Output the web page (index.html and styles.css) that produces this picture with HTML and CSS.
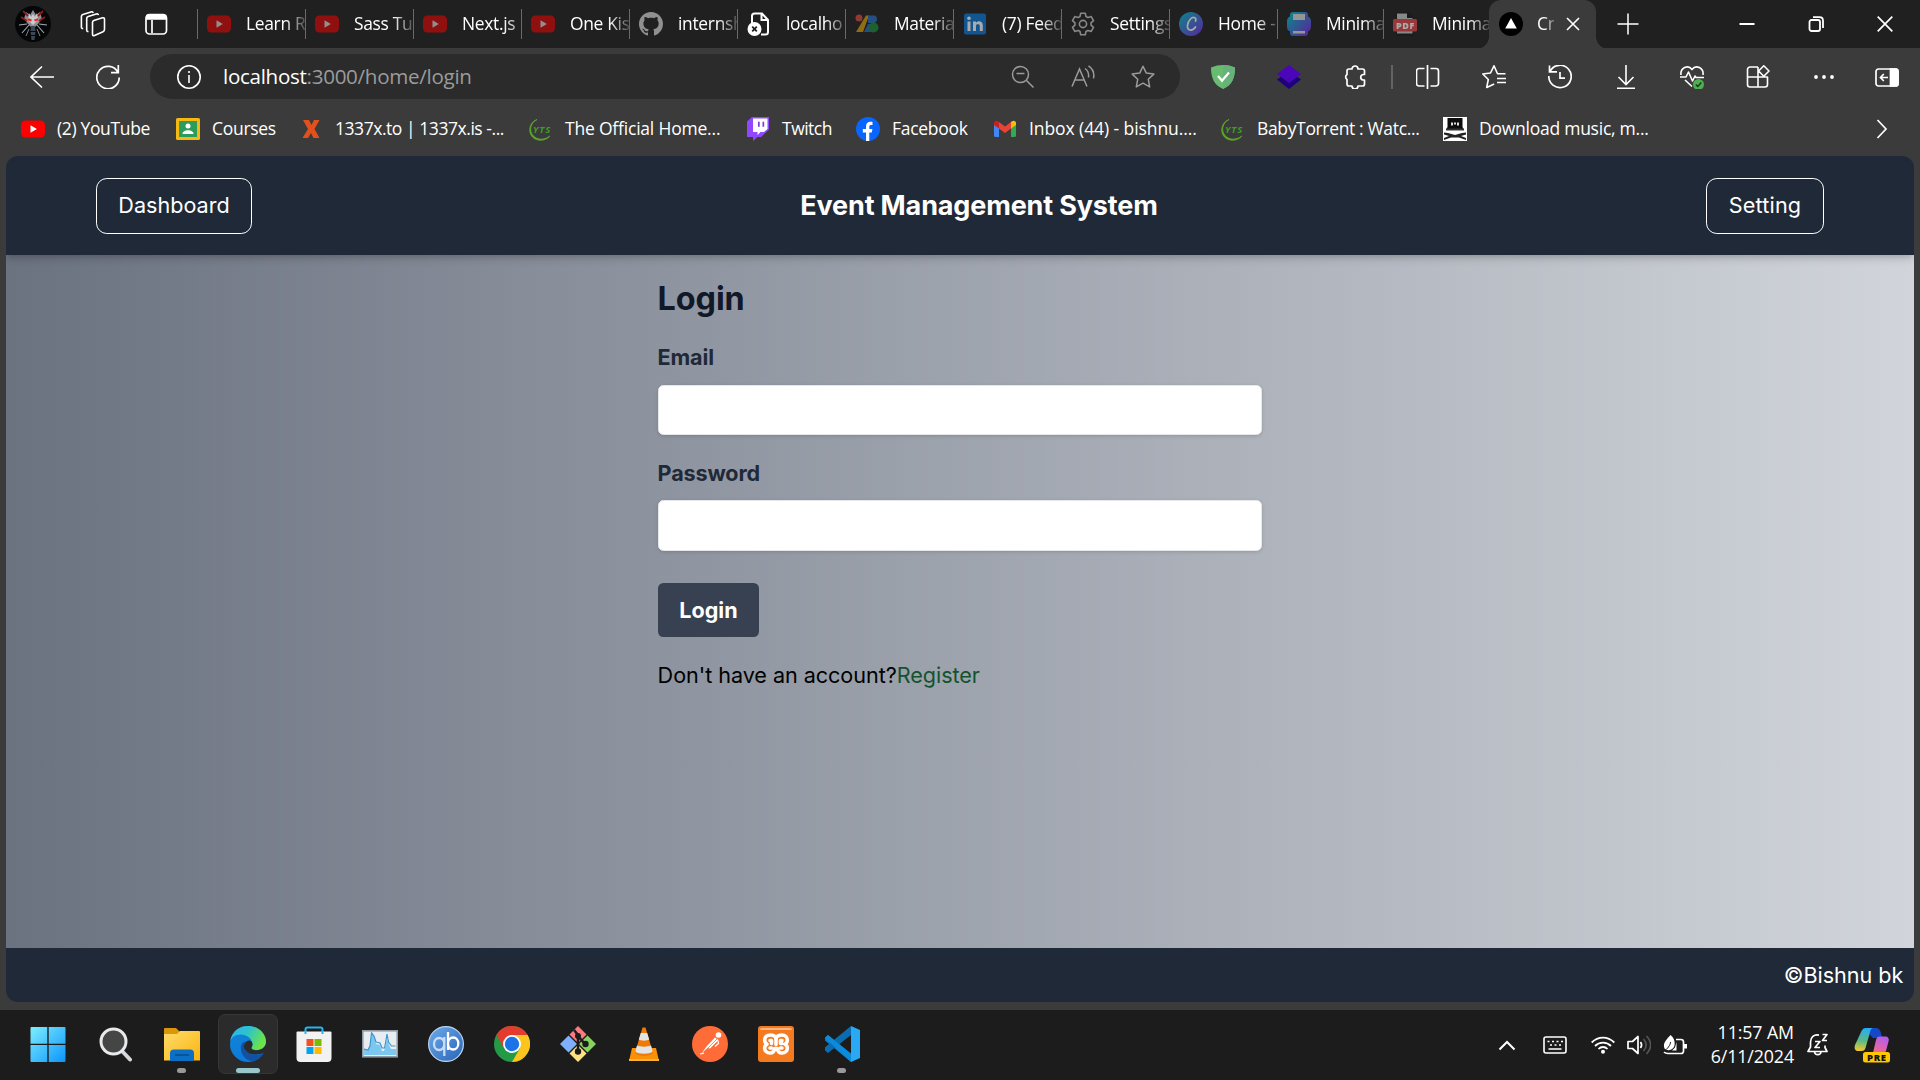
FILE: index.html
```html
<!DOCTYPE html>
<html lang="en">
<head>
<meta charset="utf-8">
<title>Create Next App</title>
<link rel="stylesheet" href="styles.css">
</head>
<body>
<svg class="defs" width="0" height="0">
  <symbol id="yt" viewBox="0 0 24 24"><rect y="3.5" width="24" height="17" rx="4.5" fill="#f00"/><path d="M9.500 8.200v7.600l6.400-3.800z" fill="#fff"/></symbol>
  <symbol id="yts" viewBox="0 0 24 24"><path d="M8 2.500C1 6 0 14 4 18.500c4 4.500 11 5 17 .5-5 5.500-13 5.500-17.500 1C-1.500 15 .5 5 8 2.500z" fill="#5fa82c" stroke="#5fa82c" stroke-width=".8"/><text x="4" y="15.500" font-family="Open Sans, sans-serif" font-size="9.500" font-weight="700" font-style="italic" fill="#3f9a2a" textLength="17">YTS</text></symbol>
  <linearGradient id="canva" x1="0" y1="0" x2="1" y2="1"><stop offset="0" stop-color="#00c4cc"/><stop offset="1" stop-color="#7d2ae8"/></linearGradient>
</svg>

<header class="tabbar">
  <div class="lead">
    <svg class="avatar" viewBox="0 0 36 36"><circle cx="18" cy="18" r="18" fill="#050608"/><path d="M11 6l4 3 3-5 3 5 4-3 2 7-4 5-5 5-5-5-4-5z" fill="#8c8f94"/><path d="M14 7l2 4 2-3 2 3 2-4 1 7-5 5-5-5z" fill="#c9cbce"/><path d="M8 5l5 5M28 5l-5 5M6 11l6 4M30 11l-6 4" stroke="#8e1a1e" stroke-width="1.800"/><path d="M13 13.200l3.500 1.300M23 13.200l-3.500 1.300" stroke="#f02020" stroke-width="2"/><path d="M4 19l8-1M32 19l-8-1M7 27l7-8M29 27l-7-8" stroke="#a3a8ad" stroke-width="1.100"/><path d="M11 30l3-7M25 30l-3-7" stroke="#7c8187" stroke-width="1"/><path d="M16 20h4l.5 5h-5zM15.500 26h5l-.5 3h-4zM16 30h4l-.5 4h-3z" fill="#3c4654"/></svg>
    <svg viewBox="0 0 26 26" fill="none" stroke="#fff" stroke-width="1.600" stroke-linejoin="round"><path d="M12.500 11.200c0-1 .4-1.500 1.300-1.800l8.700-2.600c1.200-.3 2 .3 2 1.500v10.200c0 1-.5 1.700-1.500 2.200l-8.500 3.800c-1.200.5-2 0-2-1.200z"/><path d="M8.500 20.500c-1.300.3-1.800-.4-1.800-1.500V7.500c0-1 .5-1.700 1.500-2l8-2.500c1.200-.3 2 0 2.200 1.200"/><path d="M3.200 17.500c-1.300.3-1.800-.4-1.800-1.500V5.500c0-1 .5-1.600 1.400-1.900L11 .9c1.200-.3 1.900 0 2.200 1"/></svg>
    <svg viewBox="0 0 24 24" fill="none" stroke="#fff" stroke-width="1.700"><rect x="2" y="2.500" width="20.500" height="19.500" rx="3.500"/><path d="M3 3.500h18.500v3.500H3z" fill="#fff"/><path d="M8 8v13"/></svg>
  </div>
  <div class="tab"><svg class="dim"><use href="#yt"/></svg><span>Learn R</span></div>
  <div class="tab"><svg class="dim"><use href="#yt"/></svg><span>Sass Tu</span></div>
  <div class="tab"><svg class="dim"><use href="#yt"/></svg><span class="full">Next.js</span></div>
  <div class="tab"><svg class="dim"><use href="#yt"/></svg><span>One Kis</span></div>
  <div class="tab"><svg class="dim" viewBox="0 0 16 16"><path fill="#fff" d="M8 0C3.580 0 0 3.580 0 8c0 3.540 2.290 6.530 5.470 7.590.4.070.55-.17.55-.38 0-.19-.01-.82-.01-1.490-2.010.37-2.530-.49-2.690-.94-.09-.23-.48-.94-.82-1.130-.28-.15-.68-.52-.01-.53.63-.01 1.080.58 1.230.82.72 1.210 1.870.87 2.330.66.070-.52.28-.87.51-1.070-1.780-.2-3.640-.89-3.640-3.950 0-.87.31-1.590.82-2.150-.08-.2-.36-1.020.08-2.120 0 0 .67-.21 2.200.82.64-.18 1.320-.27 2-.27s1.360.09 2 .27c1.530-1.040 2.200-.82 2.200-.82.44 1.100.16 1.920.08 2.120.51.56.82 1.270.82 2.150 0 3.070-1.870 3.750-3.650 3.950.29.25.54.73.54 1.480 0 1.070-.01 1.930-.01 2.200 0 .21.15.46.55.38A8.010 8.010 0 0016 8c0-4.420-3.580-8-8-8z"/></svg><span>internsh</span></div>
  <div class="tab"><svg viewBox="0 0 24 24"><path d="M5 12V4c0-1.600 1-2.500 2.500-2.500H15L21 8v12c0 1.700-1 2.500-2.500 2.500H14M14.500 1.500V8H21" fill="none" stroke="#fff" stroke-width="2"/><circle cx="7.500" cy="17" r="7" fill="#fff"/><path d="M5.200 14.700l4.600 4.600m0-4.600l-4.600 4.600" stroke="#202020" stroke-width="1.800"/></svg><span>localho</span></div>
  <div class="tab"><svg class="dim" viewBox="0 0 24 24"><circle cx="4" cy="6" r="3.500" fill="#ff5546"/><path d="M11 3.500h3L8 20H1z" fill="#ffb900"/><path d="M13 3.500h6c4 0 4 7 0 7.500h-6zM13 12h4v8h-8z" fill="#2b7de9"/><circle cx="18.500" cy="15.500" r="5" fill="#19a23f"/></svg><span>Materia</span></div>
  <div class="tab"><svg class="dim more" viewBox="0 0 24 24"><rect x="1" y="1.500" width="22" height="21" rx="2" fill="#0a78d6"/><path d="M4.500 9.500h3V19h-3zM10 9.500h3v1.300c1.800-2.500 6.800-2 6.800 2.500V19h-3v-5c0-2.700-3.800-2.700-3.800 0v5h-3z" fill="#fff"/><circle cx="6" cy="6.300" r="1.800" fill="#fff"/></svg><span>(7) Feed</span></div>
  <div class="tab"><svg class="dim more" viewBox="0 0 24 24" fill="none" stroke="#c8c8c8" stroke-width="1.600" stroke-linejoin="round"><path d="M9.700 1.200h4.600l.7 3.300 2 1.100 3.200-1 2.300 4-2.500 2.300v2.200l2.500 2.300-2.300 4-3.200-1-2 1.100-.7 3.300H9.700L9 19.500l-2-1.100-3.200 1-2.300-4L4 13.100v-2.200L1.500 8.600l2.300-4 3.200 1 2-1.100z"/><circle cx="12" cy="12" r="3.600"/></svg><span>Settings</span></div>
  <div class="tab"><svg class="dim more" viewBox="0 0 24 24"><circle cx="12" cy="12" r="12" fill="url(#canva)"/><path d="M16.500 9c1.500-3-2-5-5-2-4 4-4 10.500-.5 11 2.500.3 4.500-1.500 5.500-3" fill="none" stroke="#fff" stroke-width="1.700" stroke-linecap="round"/></svg><span>Home -</span></div>
  <div class="tab t106"><svg class="dim more" viewBox="0 0 24 24"><rect y="4" width="24" height="16" rx="5" fill="url(#canva)"/><rect x="3" width="18" height="24" rx="3" fill="url(#canva)"/><path d="M6 2h12v6H6zM6 19h12v2.500H6z" fill="#ddd"/></svg><span>Minima</span></div>
  <div class="tab t106"><svg class="dim more" viewBox="0 0 24 24"><path d="M3 0h13l5 5v18.500H3z" fill="#181818"/><path d="M4 1.500h10V6h5.500v15.500H4z" fill="#c8c8c8"/><rect x="0" y="7" width="24" height="12.500" rx="1.500" fill="#e4484b"/><text x="3" y="16.700" font-family="Open Sans, sans-serif" font-size="9" font-weight="800" fill="#fff" textLength="18">PDF</text></svg><span>Minima</span></div>
  <div class="tab active"><svg viewBox="0 0 24 24"><circle cx="12" cy="12" r="12" fill="#000"/><path d="M12 6l5.800 10.500H6.200z" fill="#fff"/></svg><span>Cr</span><svg class="close" viewBox="0 0 14 14"><path d="M1 1l12 12M13 1L1 13" stroke="#fff" stroke-width="1.600"/></svg></div>
  <svg class="plus" viewBox="0 0 22 22"><path d="M11 .5v21M.5 11h21" stroke="#fff" stroke-width="1.500"/></svg>
  <div class="winbtns">
    <svg viewBox="0 0 16 16"><path d="M.5 8h15" stroke="#fff" stroke-width="2"/></svg>
    <svg viewBox="0 0 16 16" fill="none" stroke="#fff" stroke-width="1.800"><rect x="1.500" y="4" width="10.500" height="11" rx="2"/><path d="M5 1.200h6.500c2 0 3.500 1.500 3.500 3.500V12"/></svg>
    <svg viewBox="0 0 16 16"><path d="M.7.7l14.600 14.600M15.300.7L.7 15.300" stroke="#fff" stroke-width="1.700"/></svg>
  </div>
</header>

<div class="toolbar">
  <svg class="back" viewBox="0 0 24 24" fill="none" stroke="#fff" stroke-width="1.600"><path d="M24 12H1M12 1.500L1 12l11 10.500"/></svg>
  <svg class="reload" viewBox="0 0 24 24" fill="none" stroke="#fff" stroke-width="1.700"><path d="M22 7.500A11.200 11.200 0 1 0 23.200 12.500M22.300 0V7.700H15"/></svg>
  <div class="address">
    <svg viewBox="0 0 24 24" fill="none" stroke="#fff" stroke-width="1.600"><circle cx="12" cy="12" r="11.200"/><path d="M12 10v8M12 6v2"/></svg>
    <p class="url"><b>localhost</b><span>:3000/home/login</span></p>
    <div class="addr-icons">
      <svg viewBox="0 0 24 24" fill="none" stroke="#9b9b9b" stroke-width="1.500"><circle cx="9.500" cy="9.500" r="8"/><path d="M5.500 8.500h8M15.500 15.500L22.500 22.500"/></svg>
      <svg viewBox="0 0 24 24" fill="none" stroke="#9b9b9b" stroke-width="1.500"><path d="M1 21.500L8.500 4 16 21.500M4 15h9M14 3.500c3 2 4 5 3.500 9M17.500 .8c4.500 3 6 7.500 5 12.500"/></svg>
      <svg viewBox="0 0 24 24" fill="none" stroke="#9b9b9b" stroke-width="1.500" stroke-linejoin="round"><path d="M12 1.200l3.300 6.900 7.500 1-5.500 5.200 1.400 7.600L12 18.200l-6.700 3.700 1.400-7.600L1.200 9.100l7.500-1z"/></svg>
    </div>
  </div>
  <div class="tools">
    <svg viewBox="0 0 24 24"><path d="M12 0c4 0 8 .8 12 2.500C24 13 21 20 12 24 3 20 0 13 0 2.500 4 .8 8 0 12 0z" fill="#68bc71"/><path d="M12 0c4 0 8 .8 12 2.500C24 13 21 20 12 24z" fill="#67b279"/><path d="M7 11l4 4.800L18 7.500" fill="none" stroke="#fff" stroke-width="2.200"/></svg>
    <svg viewBox="0 0 24 24"><path d="M12 6l12 8.500L12 24 0 14.500z" fill="#1c007c"/><path d="M12 0l12 9-12 9L0 9z" fill="#4a06b8"/></svg>
    <svg viewBox="0 0 24 24" fill="none" stroke="#fff" stroke-width="1.700" stroke-linejoin="round"><path d="M9 4a3 3 0 0 1 6 0h4.500A2 2 0 0 1 21.500 6v3.500h-1.500a2.800 2.800 0 0 0 0 5.500h1.500v4a2 2 0 0 1-2 2H15a3 3 0 0 1-6 0H6a2 2 0 0 1-2-2v-4.500a3 3 0 0 1 0-5V6a2 2 0 0 1 2-2z"/></svg>
  </div>
  <i class="vline"></i>
  <div class="tools tail">
    <svg viewBox="0 0 24 24" fill="none" stroke="#fff" stroke-width="1.700"><path d="M11.500 0v24M8.500 3.500H3a2.500 2.500 0 0 0-2.500 2.500v12.500A2.500 2.500 0 0 0 3 21H8.500M14.500 3.500h5.500A2.500 2.500 0 0 1 22.500 6v12.500a2.500 2.500 0 0 1-2.500 2.500H14.500"/></svg>
    <svg viewBox="0 0 24 24" fill="none" stroke="#fff" stroke-width="1.600" stroke-linejoin="round"><path d="M23.500 8.800H15.500L12 .8 8.500 8 .8 9l5.500 5.500L4.700 22.500l7.500-3.500M15 13.500h9M15 17.500h9"/></svg>
    <svg viewBox="0 0 24 24" fill="none" stroke="#fff" stroke-width="1.700"><path d="M2.200 6A11.200 11.200 0 1 1 .8 11M1.500 .5V6.800H9M12 7v6.200h5"/></svg>
    <svg viewBox="0 0 24 24" fill="none" stroke="#fff" stroke-width="1.600"><path d="M12 0v19M4.500 12l7.500 7.500 7.500-7.500M3 23.200h18"/></svg>
    <svg viewBox="0 0 24 24" fill="none" stroke="#fff" stroke-width="1.600" stroke-linejoin="round"><path d="M1 10C0 3 8-1 12 4.500c4-5.500 12-1.500 11 5.500M0 12h6l2.500-5 4 9 2.500-5 1 1.500h8M5 15l7 6.500"/><circle cx="18.500" cy="19.500" r="5.500" fill="#4caf50" stroke="none"/><path d="M15.800 19.500l2 2 3.500-4" stroke="#1c3a1f" stroke-width="1.400"/></svg>
    <svg viewBox="0 0 24 24" fill="none" stroke="#fff" stroke-width="1.600" stroke-linejoin="round"><path d="M12 2H4a2.500 2.500 0 0 0-2.500 2.500V19.500A2.500 2.500 0 0 0 4 22h15a2.500 2.500 0 0 0 2.500-2.500V12H1.500M12 2v20M17.800.8L23 6l-5.200 5.200L12.600 6z"/></svg>
    <svg viewBox="0 0 24 24" fill="#fff"><circle cx="4" cy="12" r="1.900"/><circle cx="12" cy="12" r="1.900"/><circle cx="20" cy="12" r="1.900"/></svg>
    <svg viewBox="0 0 24 24" fill="none" stroke="#fff" stroke-width="1.700"><rect x="1" y="4" width="22" height="17" rx="2.500"/><path d="M15.500 4h6A2 2 0 0 1 23 6v13a2 2 0 0 1-1.500 2h-6z" fill="#fff"/><path d="M13 12.500H5.500M8.800 9L5.500 12.500 8.800 16"/></svg>
  </div>
</div>

<nav class="bookmarks">
  <a><svg><use href="#yt"/></svg><span class="b1">(2) YouTube</span></a>
  <a><svg viewBox="0 0 24 24"><rect y="1" width="24" height="22" rx="1.500" fill="#f4b912"/><rect x="3" y="4" width="18" height="16" fill="#2c9c5a"/><circle cx="12" cy="9" r="2.500" fill="#fff"/><path d="M6.500 17c0-5 11-5 11 0z" fill="#fff"/></svg><span class="b2">Courses</span></a>
  <a><svg viewBox="0 0 24 24"><path d="M4 3h6l2.500 5L15 3h5.500l-5 9 5 9h-6L12 16l-3 5H3.500l5.500-9z" fill="#e2511d"/></svg><span class="b3">1337x.to | 1337x.is -...</span></a>
  <a><svg><use href="#yts"/></svg><span class="b4">The Official Home...</span></a>
  <a><svg viewBox="0 0 24 24"><path d="M6 0L1 4.500V20h6v4l4.500-4H15l8-7.500V0z" fill="#9146ff"/><path d="M7 1.500h14.500v10.500L18 15h-3.500L11.500 18v-3H7z" fill="#fff"/><path d="M12 4.800h1.700v5H12zM16.500 4.800h1.700v5h-1.700z" fill="#7b3be0"/></svg><span class="b5">Twitch</span></a>
  <a><svg viewBox="0 0 24 24"><circle cx="12" cy="12" r="12" fill="#0866ff"/><path d="M10 24v-8.500H6.800V12H10V9.800c0-4 2-5.400 6.500-4.800v3c-2.500-.2-3.200.2-3.200 2V12h3.100l-.6 3.500h-2.500V24z" fill="#fff"/></svg><span class="b6">Facebook</span></a>
  <a><svg viewBox="0 0 24 24"><path d="M1 6v12.500A1.500 1.500 0 0 0 2.500 20H6V9z" fill="#4285f4"/><path d="M23 6v12.500a1.500 1.500 0 0 1-1.500 1.500H18V9z" fill="#34a853"/><path d="M6 5l6 4.500L18 5v6.500L12 16 6 11.500z" fill="#ea4335"/><path d="M1 6c0-2 2-3 4-1.800L6 5v6.500L1 8z" fill="#c5221f"/><path d="M23 6c0-2-2-3-4-1.800L18 5v6.500L23 8z" fill="#fbbc04"/></svg><span class="b7">Inbox (44) - bishnu....</span></a>
  <a><svg><use href="#yts"/></svg><span class="b8">BabyTorrent : Watc...</span></a>
  <a><svg viewBox="0 0 24 24"><rect width="24" height="24" fill="#fff"/><path d="M4.500 1h15v9l1.500 3H3l1.500-3z" fill="#0c0c0c"/><path d="M3 11.500h18v2H3z" fill="#333"/><path d="M8 5.500h2v3H8zM11 5.500h2v2h-2zM14 5.500h2v3h-2z" fill="#ddd"/><path d="M1 15.500l4 .5 7 2 7-2 4-.5v2l-5 1.500 5 2v2l-7-2.500H8L1 23v-2l5-2-5-1.500z" fill="#222"/></svg><span class="b9">Download music, m...</span></a>
  <svg class="chev" viewBox="0 0 12 20"><path d="M1.500 1l8.500 9-8.500 9" fill="none" stroke="#fff" stroke-width="1.700"/></svg>
</nav>

<div class="page">
  <div class="site-header">
    <button class="outline dash">Dashboard</button>
    <h1>Event Management System</h1>
    <button class="outline set">Setting</button>
  </div>
  <main>
    <form>
      <h2>Login</h2>
      <label>Email</label>
      <input type="email">
      <label>Password</label>
      <input class="pw" type="password">
      <button class="submit" type="button">Login</button>
      <p>Don't have an account?<a>Register</a></p>
    </form>
  </main>
  <footer>©Bishnu bk</footer>
</div>

<div class="taskbar">
  <div class="apps">
    <div class="start"><svg viewBox="0 0 36 36"><defs><linearGradient id="win2" gradientUnits="userSpaceOnUse" x1="0" y1="0" x2="36" y2="36"><stop offset="0" stop-color="#80f0ff"/><stop offset="1" stop-color="#0a94fb"/></linearGradient></defs><path d="M.5 2a1 1 0 0 1 1-1H17.300v16.800H.5zM18.700 1h15.800a1 1 0 0 1 1 1v15.800H18.700zM.5 19h16.800v17H1.500a1 1 0 0 1-1-1zM18.700 19h16.800v16a1 1 0 0 1-1 1H18.700z" fill="url(#win2)"/></svg></div>
    <div><svg viewBox="0 0 36 36"><path d="M24 25l8 8.500" stroke="#d4d7dc" stroke-width="4" stroke-linecap="round"/><circle cx="15.500" cy="15.500" r="12.500" fill="#454545" stroke="#e8e9eb" stroke-width="3"/></svg></div>
    <div class="run"><svg viewBox="0 0 36 36"><defs><linearGradient id="fold" x1="0" y1="0" x2="1" y2="1"><stop offset="0" stop-color="#ffdc6b"/><stop offset="1" stop-color="#fab40f"/></linearGradient></defs><path d="M0 3a1 1 0 0 1 1-1h11l4 4v5H0z" fill="#dc9708"/><path d="M0 8h13l3-3h19a1 1 0 0 1 1 1v28.500H0z" fill="url(#fold)"/><path d="M6 35V27c0-2 1.500-3.500 3.500-3.500h17c2 0 3.500 1.500 3.500 3.500v8z" fill="#0b6fc4"/><path d="M11 29h14" stroke="#0a4d8c" stroke-width="1.600"/></svg></div>
    <div class="run cur"><svg viewBox="0 0 36 36"><defs><linearGradient id="e1" x1="0" y1="0" x2="1" y2=".4"><stop offset="0" stop-color="#2fb2ee"/><stop offset=".5" stop-color="#2cc3cf"/><stop offset="1" stop-color="#6be34a"/></linearGradient><linearGradient id="e2" x1="0" y1="0" x2=".5" y2="1"><stop offset="0" stop-color="#1484d0"/><stop offset="1" stop-color="#0a7be0"/></linearGradient></defs><circle cx="18" cy="18" r="18" fill="url(#e2)"/><path d="M36 15.500c0 6-5 8.500-9.500 8.500l8 3.500L38 24z" fill="#2b2b2b"/><path d="M11 20c-1 8 4 14 11 15.500 5-1 9-4 11.500-8.500C28 30 18 30 14.500 22c-1-3 0-5 1-7-2 .5-4 2.500-4.500 5z" fill="#1152a4"/><path d="M0 16C2 4 10 0 18 0c11 0 18 8 18 15.500 0 6-5 8.500-9.500 8.500-4 0-5.500-1.500-5-2.500 3-4-1-13-11-13C5 8.500 1 12 0 16z" fill="url(#e1)"/><path d="M14 19c1.500-4 5-5.500 7.500-3.500 1.500 2 1.300 4.500 0 6-.5 1 1 2.700 5 2.700 3.500 0 6-1 8-2.500l1.500 3.300-2.500 2c-7 2.500-15 2-18-3-1.500-1.500-2-3.500-1.500-5z" fill="#2b2b2b"/></svg></div>
    <div><svg viewBox="0 0 36 36"><path d="M9.500 10V3.500a2 2 0 0 1 2-2h13a2 2 0 0 1 2 2V10" fill="none" stroke="#26b4f2" stroke-width="2"/><path d="M.5 6.500a1 1 0 0 1 1-1h33a1 1 0 0 1 1 1V32a4 4 0 0 1-4 4h-27a4 4 0 0 1-4-4z" fill="#f2f2f2"/><path d="M9.500 5v3M26.500 5v3" stroke="#26b4f2" stroke-width="2"/><path d="M10.500 13h7v7h-7z" fill="#f25022"/><path d="M18.500 13h7v7h-7z" fill="#7fba00"/><path d="M10.500 21h7v7h-7z" fill="#00a4ef"/><path d="M18.500 21h7v7h-7z" fill="#ffb900"/></svg></div>
    <div><svg viewBox="0 0 36 36"><rect x=".8" y="4.800" width="34.400" height="26" fill="#e9edf2" stroke="#8e9aa4" stroke-width="1.600"/><path d="M2 23h4l2-4 2-13 2 4 2 8 4 1 2 6h2l1-3 2-9 2 6 2 4h5v6H2z" fill="#7cc6f0"/><path d="M2 23l4 1 2-4 1.500-13 2.500 3 2 6 4 1 2 5h2.500l1-5 1.500-9 1.500 8 3 4h4" fill="none" stroke="#3c98cc" stroke-width="1.200"/></svg></div>
    <div><svg viewBox="0 0 36 36"><defs><linearGradient id="qb" x1="0" y1="0" x2="1" y2="1"><stop offset="0" stop-color="#6cabea"/><stop offset="1" stop-color="#2a63b8"/></linearGradient></defs><circle cx="18" cy="18" r="17.400" fill="url(#qb)" stroke="#b9d4f0" stroke-width="1.200"/><g fill="none" stroke-width="2.300"><path d="M16.300 11v19M16.300 18c0-8-10.300-8-10.300 0s10.300 8 10.300 0" stroke="#c8dcf5"/><path d="M20 6v18M20 17.500c0-8 10.300-8 10.300 0s-10.300 8-10.300 0" stroke="#fff"/></g></svg></div>
    <div><svg viewBox="0 0 36 36"><circle cx="18" cy="18" r="18" fill="#249a46"/><path d="M2.400 9A18 18 0 0 1 33.600 9H18l-7.800 13.500z" fill="#e33b2e"/><path d="M33.600 9A18 18 0 0 1 18 36l7.800-13.500L18 9z" fill="#fcc41c"/><circle cx="18" cy="18" r="9" fill="#fff"/><circle cx="18" cy="18" r="7.200" fill="#1a73e8"/></svg></div>
    <div><svg viewBox="0 0 36 36"><path d="M18 0l8.500 8.500L18 17 9.500 8.500z" fill="#fb7c80"/><path d="M8.500 9.500L17 18l-8.500 8.500L0 18z" fill="#7fb0fb"/><path d="M27.500 9.500L36 18l-8.500 8.500L19 18z" fill="#86d35e"/><path d="M18 19l8.500 8.500L18 36l-8.500-8.500z" fill="#fde282"/><path d="M14 4l4 5v17M18 10l7 8" stroke="#1c1c1c" stroke-width="2.500" fill="none"/><circle cx="18" cy="10" r="3" fill="#1c1c1c"/><circle cx="25.500" cy="18" r="3.200" fill="#1c1c1c"/><circle cx="18" cy="25.500" r="3.200" fill="#1c1c1c"/></svg></div>
    <div><svg viewBox="0 0 36 36"><path d="M6 22h24l3 13H3z" fill="#f89008"/><path d="M3 33h30v2H3z" fill="#fdb23a"/><path d="M16.500 1.500h3L27 27c-3 4-15 4-18 0z" fill="#f07a06"/><path d="M14.800 7h6.400l2 6.500c-2 1.500-8.400 1.500-10.400 0zM11 19.500c3 1.500 11 1.500 14 0l1.700 6c-3 3-14.400 3-17.400 0z" fill="#e3e4e6"/></svg></div>
    <div><svg viewBox="0 0 36 36"><circle cx="18" cy="18" r="18" fill="#ff6c37"/><circle cx="26.500" cy="9" r="2.800" fill="#fff"/><path d="M23 11.500l3.500 2.500-8.500 8.500-2.500-.5L9.500 27.500l5-7z" fill="#fff"/><path d="M26 14.500l.5 3-3.500 3M8 28l4-.8" stroke="#fff" stroke-width="1.200" fill="none"/><path d="M25 13l-9 9" stroke="#ff6c37" stroke-width=".8"/></svg></div>
    <div><svg viewBox="0 0 36 36"><rect width="36" height="36" rx="3" fill="#f47a20"/><path d="M2 4a2 2 0 0 1 2-2h28a2 2 0 0 1 2 2z" fill="#fab486"/><path d="M18 13.500c-.2-3-2-4.500-5.300-4.500-4 0-6 2.200-6 5 0 2 1 3.400 2.300 4.200-1.300.8-2.300 2.200-2.300 4 0 2.600 2 4.800 5.300 4.800 3 0 4.500-2 4.500-4.500h3c0 2.500 1.500 4.500 4.500 4.500 3.300 0 5.300-2.200 5.300-4.800 0-1.800-1-3.200-2.300-4 1.300-.8 2.300-2.200 2.300-4.200 0-2.800-2-5-5.300-5-3.500 0-5.800 1.500-6 4.500v5M12 14.500h1.500v3M13.500 22h-1.500M24 14.500h-1.500v3h1.500M22.500 22h1.500" fill="none" stroke="#fff" stroke-width="3.600" stroke-linejoin="round" stroke-linecap="round"/></svg></div>
    <div class="run"><svg viewBox="0 0 36 36"><path d="M1 11.500l3-2.500L27 27.500V36L1 14.500z" fill="#0f7ec6"/><path d="M27 0v9L4 27l-3-2.500v-3.300z" fill="#0b6db0"/><path d="M1 12l3-3 23 19v8z" fill="#0b8bdc"/><path d="M27 0l9 4v28l-9 4z" fill="#29a9f4"/></svg></div>
  </div>
  <div class="tray">
    <svg class="t-chev" viewBox="0 0 18 12"><path d="M1.500 10.500L9 3l7.500 7.500" fill="none" stroke="#fff" stroke-width="2"/></svg>
    <svg class="t-key" viewBox="0 0 24 18"><rect x="1" y="1" width="22" height="16" rx="2" fill="none" stroke="#fff" stroke-width="1.600"/><path d="M4.500 5.500h2m2.500 0h2m2.500 0h2m2.500 0h2M7 9h2m2.500 0h2m2.500 0h2M5.500 13h13" stroke="#fff" stroke-width="1.700"/></svg>
    <svg class="t-wifi" viewBox="0 0 24 18" fill="none" stroke="#fff" stroke-width="1.800"><path d="M.7 6.500c6.500-6.500 16-6.500 22.600 0M4 10c4.500-4.500 11.500-4.500 16 0M7.500 13c2.500-2.700 6.500-2.700 9 0"/><circle cx="12" cy="15.700" r="2" fill="#fff" stroke="none"/></svg>
    <svg class="t-vol" viewBox="0 0 24 20" fill="none" stroke="#fff" stroke-width="1.700" stroke-linejoin="round"><path d="M1 6.500h4.500L11 1.500v17l-5.500-5H1z"/><path d="M13.500 7c1.500 2 1.500 4 0 6"/><path d="M16.500 4c3.500 4 3.500 8 0 12M19.500 1c5.500 6 5.500 12 0 18" stroke="#555"/></svg>
    <svg class="t-bat" viewBox="0 0 24 20"><path d="M13 4.500h5a2.500 2.500 0 0 1 2.500 2.500v8.500A2.500 2.500 0 0 1 18 18.500H5c-2 0-3-.5-4-1.500" fill="none" stroke="#fff" stroke-width="1.700"/><path d="M21 9h3v4.500h-3z" fill="#fff"/><path d="M7.500 0c4 3 5 8 3.500 12-3 4-7 4-9.500 1.500C-.5 8.500 3 5 7.500 0z" fill="#fff"/><path d="M7.500 7c0 3-3 7-7 9.500" stroke="#1c1c1c" fill="none"/><path d="M13.500 7v8.500H9l3-3z" fill="#fff"/></svg>
    <div class="clock"><span>11:57 AM</span><span>6/11/2024</span></div>
    <svg class="t-bell" viewBox="0 0 22 24" fill="none" stroke="#fff" stroke-width="1.700" stroke-linejoin="round"><path d="M12 2.200C7 1 3.500 4.500 3.500 9v5L1 18.500h19L18 14.500v-2M7.500 19c.5 3.500 6 3.500 6.500 0M8 8.500h5l-5 6h5M15.500 1.500h4.500l-4.500 6h4.500"/></svg>
    <svg class="t-cop" viewBox="0 0 36 36"><defs><linearGradient id="c1" x1=".4" y1="0" x2=".3" y2="1"><stop offset="0" stop-color="#26aef0"/><stop offset=".55" stop-color="#5cb887"/><stop offset="1" stop-color="#f5c92a"/></linearGradient><linearGradient id="c2" x1=".7" y1="0" x2=".3" y2="1"><stop offset="0" stop-color="#b25df0"/><stop offset="1" stop-color="#ff6b75"/></linearGradient></defs><path d="M9 1h13c3 0 4 2 5 5l1 5h-9z" fill="#1547c8"/><path d="M7.500 4C8.500 2 10 1 12 1h8c-3 0-3.500 2-4.500 6l-4 14c-.7 2-1.500 3-4 3H4c-3 0-4-2.500-3-6z" fill="url(#c1)"/><path d="M22 13c.7-2.500 1.800-3.500 4-3.500h5c3 0 4.500 2 3.500 5L32 24 28 30h-10z" fill="url(#c2)"/><rect x="9" y="25" width="27" height="10.500" rx="2.500" fill="#ffc800"/><text x="13" y="33.500" font-family="Open Sans, sans-serif" font-size="9.500" font-weight="800" fill="#111" textLength="19">PRE</text></svg>
  </div>
</div>
</body>
</html>
```
FILE: styles.css
```css
* { box-sizing: border-box; }
body {
  margin: 0;
  width: 1920px;
  height: 1080px;
  overflow: hidden;
  background: #3b3b3b;
  color: #fff;
  font-family: "Open Sans", "Noto Sans", sans-serif;
  display: flex;
  flex-direction: column;
}
svg { display: block; flex: none; width: 24px; height: 24px; }
.defs { position: absolute; width: 0; height: 0; }

/* tab strip */
.tabbar { height: 48px; background: #202020; display: flex; align-items: center; flex: none; }
.lead { width: 197px; display: flex; align-items: center; padding-left: 15px; }
.lead .avatar { width: 36px; height: 36px; margin-right: 29px; }
.lead svg + svg { width: 26px; height: 26px; margin-right: 38px; }
.lead svg:last-child { width: 24px; height: 24px; margin-right: 0; }
.tab {
  width: 108px; height: 30px; flex: none;
  display: flex; align-items: center;
  border-left: 1.500px solid #6a6a6a;
  padding-left: 9px;
  font-size: 17.400px; letter-spacing: -0.3px; line-height: 28px;
}
.tab.t106 { width: 106px; }
.tab span {
  flex: 1; margin-left: 15px; height: 30px; overflow: hidden; white-space: nowrap;
  -webkit-mask-image: linear-gradient(90deg, #000 calc(100% - 20px), rgba(0,0,0,.2) 100%);
  mask-image: linear-gradient(90deg, #000 calc(100% - 20px), rgba(0,0,0,.2) 100%);
}
.tab span.full { -webkit-mask-image: linear-gradient(90deg, #000 calc(100% - 18px), rgba(0,0,0,.5) 100%); mask-image: linear-gradient(90deg, #000 calc(100% - 18px), rgba(0,0,0,.5) 100%); }
.dim { opacity: .5; }
.dim.more { opacity: .62; }
.tab.active {
  position: relative;
  width: 107px; height: 48px; border: 0; background: #3b3b3b;
  border-radius: 12px 12px 0 0; padding-left: 10px; padding-right: 16px;
}
.tab.active::before, .tab.active::after {
  content: ""; position: absolute; bottom: 0; width: 9px; height: 12px;
}
.tab.active::before { left: -9px; background: radial-gradient(ellipse 9px 12px at 0 0, #202020 98%, #3b3b3b 100%); }
.tab.active::after { right: -9px; background: radial-gradient(ellipse 9px 12px at 100% 0, #202020 98%, #3b3b3b 100%); }
.tab.active span {
  margin-left: 14px; margin-right: 12px;
  -webkit-mask-image: linear-gradient(90deg, #000 40%, rgba(0,0,0,.3) 100%);
  mask-image: linear-gradient(90deg, #000 40%, rgba(0,0,0,.3) 100%);
}
.close { width: 14px; height: 14px; }
.plus { width: 22px; height: 22px; margin-left: 21px; }
.winbtns { display: flex; margin-left: auto; gap: 53px; padding-right: 27px; }
.winbtns svg { width: 16px; height: 16px; }

/* toolbar */
.toolbar { height: 57px; flex: none; display: flex; align-items: center; }
.back { margin-left: 30px; }
.reload { margin-left: 42px; }
.address {
  width: 1030px; height: 45px; margin-left: 30px; border-radius: 23px; background: #2b2b2b;
  display: flex; align-items: center; padding-left: 27px; padding-right: 25px;
}
.url { margin: 0 0 2px 22px; font-size: 20.600px; letter-spacing: -0.300px; color: #9b9b9b; }
.url b { font-weight: 400; color: #fff; }
.addr-icons { margin-left: auto; display: flex; gap: 36px; }
.tools { display: flex; gap: 42px; margin-left: 31px; }
.vline { width: 1.500px; height: 24px; background: #636363; margin-left: 24px; }
.tools.tail { margin-left: 23px; }
.tools.tail svg:last-child { margin-left: -3px; }

/* bookmarks */
.bookmarks { height: 48px; flex: none; display: flex; align-items: center; padding-left: 21px; gap: 25px; font-size: 17.500px; letter-spacing: -0.300px; }
.bookmarks a { display: flex; align-items: center; gap: 12px; }
.bookmarks span { white-space: nowrap; margin-bottom: 2px; }
.b1 { width: 94px; letter-spacing: -0.350px; } .b2 { width: 62px; }
.b3 { width: 169px; letter-spacing: -0.450px; }
.b4 { width: 156px; letter-spacing: -0.200px; }
.b5 { width: 49px; letter-spacing: -0.500px; }
.b6 { width: 76px; }
.b7 { width: 167px; letter-spacing: -0.080px; }
.b8 { width: 161px; letter-spacing: -0.350px; }
.b9 { width: 169px; letter-spacing: -0.250px; }
.chev { width: 12px; height: 20px; margin-left: auto; margin-right: 32px; }

/* web page */
.page {
  height: 846px; flex: none; margin: 3px 6px 8px; border-radius: 12px; overflow: hidden;
  display: flex; flex-direction: column;
  font-family: Inter, sans-serif; font-size: 21.600px; line-height: 32.400px;
}
.site-header {
  height: 99px; flex: none; padding: 0 90px; background: #1f2937;
  display: flex; align-items: center; justify-content: space-between;
  box-shadow: 0 5px 8px -1px rgba(0,0,0,.14), 0 3px 5px -2px rgba(0,0,0,.12);
  z-index: 1;
}
.site-header h1 { margin: 0; padding-top: 1px; font-size: 27px; font-weight: 700; letter-spacing: -0.150px; }
button { font: inherit; color: #fff; }
.outline { height: 56px; padding: 0; border: 1px solid #fff; border-radius: 10.800px; background: none; }
.dash { width: 156px; }
.set { width: 118px; letter-spacing: 0.200px; }
main { flex: 1; background: linear-gradient(90deg, #6b7280, #d1d5db); display: flex; justify-content: center; }
form { width: 604.800px; padding-top: 21.600px; }
h2 { margin: 0 0 21.600px; font-size: 32.400px; line-height: 43.200px; font-weight: 700; letter-spacing: -0.100px; color: #111827; }
label { display: block; font-weight: 700; letter-spacing: -0.150px; color: #1f2937; margin-bottom: 10.800px; }
input {
  display: block; width: 100%; height: 50.600px; margin: 0 0 21.600px;
  border: 1px solid #e5e7eb; border-radius: 5.400px; background: #fff;
  box-shadow: 0 1px 4px rgba(0,0,0,.1), 0 1px 3px -1px rgba(0,0,0,.1);
}
input.pw { margin-bottom: 32.400px; }
.submit { display: block; height: 54px; padding: 0 21.600px; border: 0; border-radius: 5.400px; background: #374151; font-weight: 700; }
form p { margin: 21.600px 0 0; color: #000; letter-spacing: -0.050px; }
form p a { color: #14532d; }
footer { height: 54px; flex: none; background: #1f2937; padding: 10.800px; text-align: right; letter-spacing: -0.050px; }

/* taskbar */
.taskbar { height: 70px; flex: none; background: #1c1c1c; display: flex; justify-content: space-between; }
.apps { display: flex; padding-left: 18px; padding-top: 4px; gap: 6px; }
.apps > div { position: relative; width: 60px; height: 60px; display: flex; align-items: center; justify-content: center; }
.apps .start { margin-right: 2px; }
.apps svg { width: 36px; height: 36px; }
.apps .cur { background: #2b2b2b; border: 1.500px solid #363636; border-radius: 7px; }
.run::after { content: ""; position: absolute; left: 25px; bottom: 1px; width: 9px; height: 5px; border-radius: 3px; background: #999; }
.run.cur::after { left: 17px; bottom: 0; width: 24px; background: #98c6cc; }
.tray { display: flex; align-items: center; padding-right: 30px; }
.t-chev { width: 18px; height: 12px; margin-right: 27px; }
.t-key { height: 18px; margin-right: 24px; }
.t-wifi { height: 18px; margin-right: 12px; }
.t-vol { height: 20px; margin-right: 12px; }
.t-bat { height: 20px; }
.clock { width: 107px; display: flex; flex-direction: column; text-align: right; font-size: 17.800px; line-height: 24px; letter-spacing: -0.100px; margin-bottom: 2px; }
.t-bell { width: 22px; margin-left: 13px; margin-right: 25px; }
.t-cop { width: 36px; height: 36px; }
```
